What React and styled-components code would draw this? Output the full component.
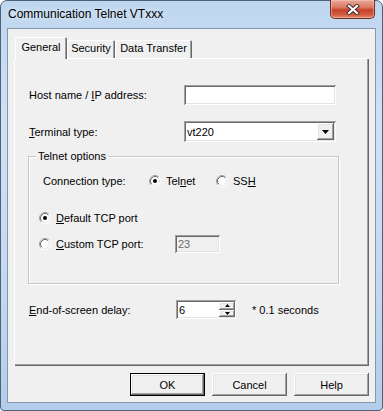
import React from 'react';
import styled, { createGlobalStyle } from 'styled-components';

const GlobalStyle = createGlobalStyle`
  html, body {
    margin: 0;
    padding: 0;
    background: #ffffff;
  }
  body {
    font-family: "Liberation Sans", Arial, sans-serif;
    font-size: 11px;
    color: #000;
  }
`;

const raised = `
  inset -1px -1px #696969,
  inset 1px 1px #ffffff,
  inset -2px -2px #a0a0a0,
  inset 2px 2px #e3e3e3
`;

const sunken = `
  inset 1px 1px #a0a0a0,
  inset -1px -1px #ffffff,
  inset 2px 2px #696969,
  inset -2px -2px #e3e3e3
`;

const Window = styled.div`
  box-sizing: border-box;
  width: 383px;
  height: 411px;
  border: 1px solid #4d6178;
  border-radius: 7px 7px 4px 4px;
  background: linear-gradient(180deg, #bed6ef 0%, #cfe2f5 30%, #c3d9f0 70%, #b3cdea 100%);
  display: flex;
  flex-direction: column;
  padding: 0 6px 7px 6px;
`;

const TitleBar = styled.div`
  height: 27px;
  display: flex;
  align-items: flex-start;
  padding-left: 1px;
`;

const Title = styled.div`
  flex: 1;
  font-size: 12px;
  line-height: 27px;
  color: #000;
  text-shadow: 0 0 6px rgba(255, 255, 255, 0.9);
`;

const CloseButton = styled.div`
  width: 45px;
  height: 19px;
  margin-top: -1px;
  margin-right: 1px;
  box-sizing: border-box;
  border: 1px solid #6b2e25;
  border-top: none;
  border-radius: 0 0 5px 5px;
  background: linear-gradient(180deg, #e9a99a 0%, #dc7a64 40%, #c7432b 55%, #d2583c 80%, #e08a70 100%);
  box-shadow: inset 0 0 0 1px rgba(255, 210, 200, 0.45);
  display: flex;
  align-items: center;
  justify-content: center;
`;

const Client = styled.div`
  flex: 1;
  box-sizing: border-box;
  border: 1px solid #8497ac;
  background: #f0f0f0;
  display: flex;
  flex-direction: column;
  padding: 8px 6px 6px 6px;
`;

const TabStrip = styled.div`
  display: flex;
  align-items: flex-end;
  height: 21px;
  padding-left: 1px;
  position: relative;
  z-index: 1;
`;

const Tab = styled.div`
  box-sizing: border-box;
  width: ${(p) => p.$w}px;
  height: ${(p) => (p.$active ? 22 : 18)}px;
  margin-bottom: ${(p) => (p.$active ? -1 : 0)}px;
  background: #f0f0f0;
  border-radius: 2px 2px 0 0;
  box-shadow: inset 1px 1px #ffffff, inset -1px 0 #696969, inset -2px 0 #a0a0a0;
  display: flex;
  justify-content: center;
  padding-top: ${(p) => (p.$active ? 4 : 2)}px;
  white-space: nowrap;
`;

const Panel = styled.div`
  box-sizing: border-box;
  height: 308px;
  background: #f0f0f0;
  box-shadow: inset 1px 1px #ffffff, inset -1px -1px #696969, inset -2px -2px #a0a0a0;
  padding: 27px 30px 0 15px;
  display: flex;
  flex-direction: column;
`;

const Row = styled.div`
  display: flex;
  align-items: center;
  height: ${(p) => p.$h || 20}px;
  margin-top: ${(p) => p.$mt || 0}px;
  padding-left: ${(p) => p.$pl || 0}px;
`;

const Label = styled.span`
  width: ${(p) => p.$w}px;
  flex: none;
  white-space: nowrap;
`;

const Key = styled.u`
  text-decoration-thickness: 1px;
  text-underline-offset: 1px;
`;

const TextField = styled.div`
  box-sizing: border-box;
  width: ${(p) => p.$w}px;
  height: ${(p) => p.$h}px;
  background: ${(p) => (p.$disabled ? '#f0f0f0' : '#ffffff')};
  color: ${(p) => (p.$disabled ? '#6d6d6d' : '#000')};
  box-shadow: ${sunken};
  padding-left: 3px;
  display: flex;
  align-items: center;
`;

const Combo = styled.div`
  box-sizing: border-box;
  width: 152px;
  height: 21px;
  background: #ffffff;
  box-shadow: ${sunken};
  padding: 2px 2px 2px 3px;
  display: flex;
  align-items: center;
`;

const ComboText = styled.span`
  flex: 1;
`;

const ArrowButton = styled.div`
  box-sizing: border-box;
  width: 17px;
  height: 17px;
  background: #f0f0f0;
  box-shadow: ${raised};
  display: flex;
  align-items: center;
  justify-content: center;
`;

const GroupBox = styled.div`
  position: relative;
  box-sizing: border-box;
  height: 128px;
  margin-top: 14px;
  margin-left: -1px;
  border: 1px solid #c6c6c6;
  box-shadow: inset 1px 1px #ffffff, 1px 1px #ffffff;
  padding: 14px 0 0 10px;
`;

const GroupTitle = styled.span`
  position: absolute;
  top: -7px;
  left: 7px;
  padding: 0 2px;
  background: #f0f0f0;
  line-height: 13px;
`;

const RadioLabel = styled.label`
  display: flex;
  align-items: center;
  gap: 5px;
  width: ${(p) => (p.$w ? `${p.$w}px` : 'auto')};
  flex: none;
  white-space: nowrap;
`;

const SpinBox = styled.div`
  box-sizing: border-box;
  width: 60px;
  height: 19px;
  background: #ffffff;
  box-shadow: ${sunken};
  padding: 2px 2px 2px 3px;
  display: flex;
  align-items: center;
`;

const SpinText = styled.span`
  flex: 1;
`;

const SpinButtons = styled.div`
  display: flex;
  flex-direction: column;
  width: 16px;
  height: 15px;
  margin-right: -1px;
`;

const SpinButton = styled.div`
  flex: 1;
  box-sizing: border-box;
  background: #f0f0f0;
  box-shadow: ${raised};
  display: flex;
  align-items: center;
  justify-content: center;
`;

const Hint = styled.span`
  margin-left: 16px;
`;

const ButtonRow = styled.div`
  display: flex;
  justify-content: flex-end;
  gap: 7px;
  margin-top: 7px;
`;

const Button = styled.div`
  box-sizing: border-box;
  width: 75px;
  height: 23px;
  background: #f0f0f0;
  box-shadow: ${(p) =>
    p.$default
      ? `inset 0 0 0 1px #000000, inset -2px -2px #696969, inset 2px 2px #ffffff, inset -3px -3px #a0a0a0, inset 3px 3px #e3e3e3`
      : raised};
  display: flex;
  align-items: center;
  justify-content: center;
`;

function Radio({ checked }) {
  return (
    <svg width="12" height="12" viewBox="0 0 12 12">
      <circle cx="6" cy="6" r="5.5" fill="#ffffff" />
      <path d="M2.11 9.89 A5.5 5.5 0 0 1 9.89 2.11" fill="none" stroke="#a0a0a0" strokeWidth="1" />
      <path d="M2.82 9.18 A4.5 4.5 0 0 1 9.18 2.82" fill="none" stroke="#696969" strokeWidth="1" />
      <path d="M9.89 2.11 A5.5 5.5 0 0 1 2.11 9.89" fill="none" stroke="#ffffff" strokeWidth="1" />
      <path d="M9.18 2.82 A4.5 4.5 0 0 1 2.82 9.18" fill="none" stroke="#e3e3e3" strokeWidth="1" />
      {checked && <circle cx="6" cy="6" r="2" fill="#000000" />}
    </svg>
  );
}

function Triangle({ w = 7, h = 4, up }) {
  return (
    <svg width={w} height={h} viewBox={`0 0 ${w} ${h}`}>
      <polygon
        points={up ? `0,${h} ${w},${h} ${w / 2},0` : `0,0 ${w},0 ${w / 2},${h}`}
        fill="#000000"
      />
    </svg>
  );
}

export default function App() {
  return (
    <>
      <GlobalStyle />
      <Window>
        <TitleBar>
          <Title>Communication Telnet VTxxx</Title>
          <CloseButton>
            <svg width="14" height="11" viewBox="0 0 14 11">
              <path d="M3 2 L11 9 M11 2 L3 9" stroke="#3c2a28" strokeWidth="4" strokeLinecap="square" />
              <path d="M3 2 L11 9 M11 2 L3 9" stroke="#ffffff" strokeWidth="2.2" strokeLinecap="square" />
            </svg>
          </CloseButton>
        </TitleBar>
        <Client>
          <TabStrip>
            <Tab $active $w={52}>General</Tab>
            <Tab $w={48}>Security</Tab>
            <Tab $w={77}>Data Transfer</Tab>
          </TabStrip>
          <Panel>
            <Row>
              <Label $w={155}>
                Host name / <Key>I</Key>P address:
              </Label>
              <TextField $w={152} $h={20} />
            </Row>
            <Row $h={21} $mt={16}>
              <Label $w={155}>
                <Key>T</Key>erminal type:
              </Label>
              <Combo>
                <ComboText>vt220</ComboText>
                <ArrowButton>
                  <Triangle />
                </ArrowButton>
              </Combo>
            </Row>
            <GroupBox>
              <GroupTitle>Telnet options</GroupTitle>
              <Row $pl={4}>
                <Label $w={106}>Connection type:</Label>
                <RadioLabel $w={67}>
                  <Radio checked />
                  <span>
                    Tel<Key>n</Key>et
                  </span>
                </RadioLabel>
                <RadioLabel>
                  <Radio />
                  <span>
                    SS<Key>H</Key>
                  </span>
                </RadioLabel>
              </Row>
              <Row $mt={17}>
                <RadioLabel>
                  <Radio checked />
                  <span>
                    <Key>D</Key>efault TCP port
                  </span>
                </RadioLabel>
              </Row>
              <Row $mt={6}>
                <RadioLabel $w={136}>
                  <Radio />
                  <span>
                    <Key>C</Key>ustom TCP port:
                  </span>
                </RadioLabel>
                <TextField $w={45} $h={18} $disabled>
                  23
                </TextField>
              </Row>
            </GroupBox>
            <Row $h={19} $mt={16}>
              <Label $w={147}>
                <Key>E</Key>nd-of-screen delay:
              </Label>
              <SpinBox>
                <SpinText>6</SpinText>
                <SpinButtons>
                  <SpinButton>
                    <Triangle w={5} h={3} up />
                  </SpinButton>
                  <SpinButton>
                    <Triangle w={5} h={3} />
                  </SpinButton>
                </SpinButtons>
              </SpinBox>
              <Hint>* 0.1 seconds</Hint>
            </Row>
          </Panel>
          <ButtonRow>
            <Button $default>OK</Button>
            <Button>Cancel</Button>
            <Button>Help</Button>
          </ButtonRow>
        </Client>
      </Window>
    </>
  );
}
